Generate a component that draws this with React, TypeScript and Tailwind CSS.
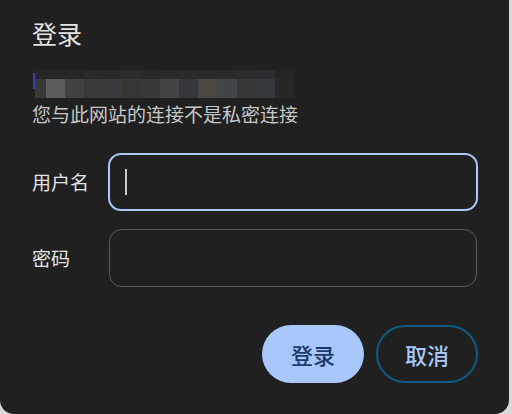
import React from 'react';

const font = { fontFamily: '"Noto Sans CJK SC", "Noto Sans", sans-serif' };

// blurred (pixelated) site address, top strip then main strip
const topRow = [
    'w-[11px] bg-[#252525]',
    'w-[19px] bg-[#272727]',
    'w-[19px] bg-[#262626]',
    'w-[19px] bg-[#2a2a28]',
    'w-[19px] bg-[#292929]',
    'w-[19px] bg-[#2b2d2c]',
    'w-[19px] bg-[#282828]',
    'w-[19px] bg-[#2a2a2a]',
    'w-[19px] bg-[#292a2c]',
    'w-[19px] bg-[#2a2a29]',
    'w-[20px] bg-[#292a2b]',
    'w-[19px] bg-[#2c2b29]',
    'w-[19px] bg-[#2b2d2f]',
    'w-[19px] bg-[#252422]',
];

const bottomRow = [
    'w-[11px] bg-[#383838]',
    'w-[19px] bg-[#5d5c5d]',
    'w-[19px] bg-[#42433f]',
    'w-[19px] bg-[#3a3a3a]',
    'w-[19px] bg-[#3b3b3f]',
    'w-[19px] bg-[#373533]',
    'w-[19px] bg-[#393937]',
    'w-[19px] bg-[#434543]',
    'w-[19px] bg-[#35383b]',
    'w-[19px] bg-[#484840]',
    'w-[20px] bg-[#414549]',
    'w-[19px] bg-[#393735]',
    'w-[19px] bg-[#35393d]',
    'w-[19px] bg-[#292725]',
];

export default function App() {
    return (
        <div className="w-[512px] h-[414px] bg-[#dadada] overflow-hidden" style={font}>
            <div className="w-[509px] h-[414px] bg-[#202020] rounded-b-[14px] pt-[18px] pl-[32px] pr-[31px] flex flex-col">
                <h2 className="text-[25px] leading-[30px] text-[#e3e3e3]">登录</h2>

                {/* Blurred URL */}
                <div className="relative mt-[22px] h-[28px] flex flex-col">
                    <div className="flex h-[9px] pl-[3px]">
                        {topRow.map((c, i) => (
                            <div key={i} className={`h-full ${c}`} />
                        ))}
                    </div>
                    <div className="flex h-[19px] pl-[3px]">
                        {bottomRow.map((c, i) => (
                            <div key={i} className={`h-full ${c}`} />
                        ))}
                    </div>
                    <div className="absolute left-[1px] top-[3px] w-[2px] h-[16px] bg-[#3d3fb0]" />
                </div>

                <p className="mt-[4px] text-[19px] leading-[24px] text-[#c7c7c7]">您与此网站的连接不是私密连接</p>

                {/* Form */}
                <div className="mt-[27px] flex flex-col gap-[18px]">
                    <div className="flex items-center">
                        <label className="w-[76px] text-[19px] leading-[24px] text-[#e3e3e3]">用户名</label>
                        <div className="w-[370px] h-[58px] rounded-[13px] border-2 border-[#a8c7fa] flex items-center pl-[15px]">
                            <span className="w-[2px] h-[26px] bg-[#c8c8c8]" />
                        </div>
                    </div>
                    <div className="flex items-center">
                        <label className="w-[76px] text-[19px] leading-[24px] text-[#e3e3e3]">密码</label>
                        <div className="ml-[1px] w-[368px] h-[58px] rounded-[13px] border border-[#5a5a5a]" />
                    </div>
                </div>

                {/* Actions */}
                <div className="mt-[38px] flex justify-end gap-[12px]">
                    <button className="w-[102px] h-[58px] rounded-full bg-[#a8c7fa] text-[#1c3a6b] text-[22px] font-medium leading-none">
                        登录
                    </button>
                    <button className="w-[102px] h-[58px] rounded-full border-2 border-[#0f5a80] text-[#a8c7fa] text-[22px] font-medium leading-none">
                        取消
                    </button>
                </div>
            </div>
        </div>
    );
}
